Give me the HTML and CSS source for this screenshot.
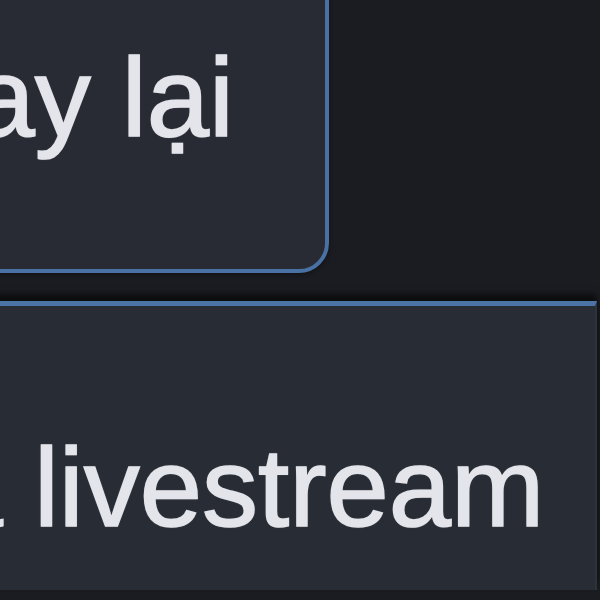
FILE: index.html
```html
<!DOCTYPE html>
<html lang="vi">
<head>
<meta charset="utf-8">
<title>Livestream</title>
<link rel="stylesheet" href="styles.css">
</head>
<body>
<div class="page">
  <div class="toolbar">
    <button class="back">Quay lại</button>
  </div>
  <div class="bar">
    <span class="bar-title">Tham gia livestream</span>
  </div>
</div>
</body>
</html>
```
FILE: styles.css
```css
html, body {
  margin: 0;
  padding: 0;
  background: #1b1c21;
  overflow: hidden;
}
.page {
  width: 600px;
  height: 600px;
  display: flex;
  flex-direction: column;
  font-family: "Liberation Sans", Arial, sans-serif;
  color: #e3e5ea;
}
.toolbar {
  display: flex;
  margin-top: -60px;
}
.back {
  margin-left: -220px;
  width: 549px;
  box-sizing: border-box;
  padding: 98px 0 115px 39px;
  text-align: left;
  font-family: inherit;
  font-size: 112px;
  line-height: 112px;
  color: #e3e5ea;
  background: #282b34;
  border: 4px solid #4a71a3;
  border-radius: 0 0 30px 30px;
  white-space: nowrap;
  box-shadow: 0 2px 4px rgba(0, 0, 0, 0.35);
}
.back,
.bar-title {
  -webkit-text-stroke: 1.6px #e3e5ea;
  text-shadow: 0 0 2px rgba(227, 229, 234, 0.5);
}
.bar {
  margin-top: 28px;
  margin-left: -464px;
  margin-right: 3px;
  padding: 126px 0 46px 0;
  background: #282c35;
  border-top: 5px solid #4b73a6;
  border-right: 2px solid #2e323b;
  box-shadow: 0 -7px 6px rgba(0, 0, 0, 0.55);
  font-size: 112px;
  line-height: 112px;
  white-space: nowrap;
}
```
